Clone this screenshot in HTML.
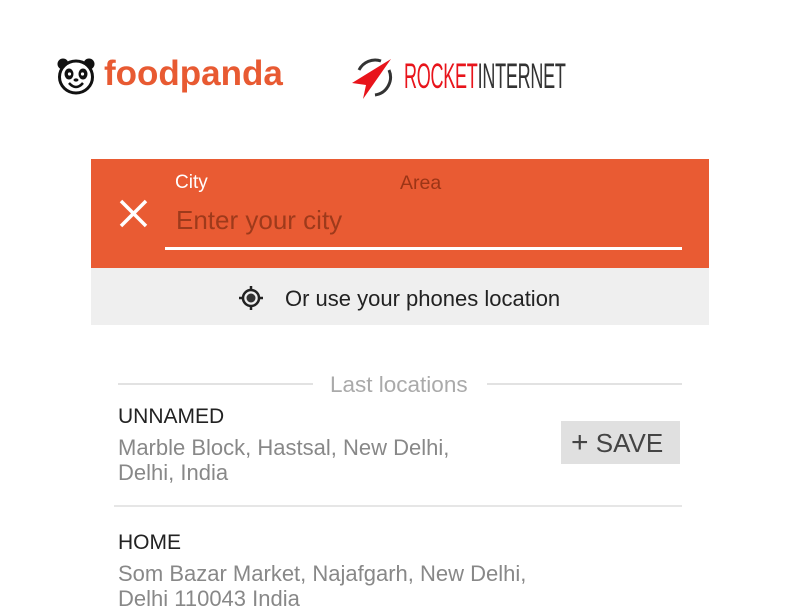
<!DOCTYPE html>
<html><head><meta charset="utf-8"><style>
*{margin:0;padding:0;box-sizing:border-box}
body{width:800px;height:600px;background:#fff;position:relative;overflow:hidden;font-family:"Liberation Sans",sans-serif}
.a{position:absolute;white-space:nowrap}
</style></head><body>
<svg class="a" style="left:56px;top:56px" width="40" height="40" viewBox="0 0 40 40">
<circle cx="7" cy="8" r="5.5" fill="#111"/><circle cx="33" cy="8" r="5.5" fill="#111"/>
<ellipse cx="20" cy="21" rx="16.5" ry="16" fill="#fff" stroke="#111" stroke-width="3"/>
<ellipse cx="13" cy="18" rx="4.5" ry="5.5" fill="#111"/><ellipse cx="27" cy="18" rx="4.5" ry="5.5" fill="#111"/>
<circle cx="13.5" cy="18" r="1.6" fill="#fff"/><circle cx="26.5" cy="18" r="1.6" fill="#fff"/>
<ellipse cx="20" cy="24" rx="2.5" ry="1.6" fill="#111"/>
<path d="M13 27 Q20 35 27 27" fill="none" stroke="#111" stroke-width="2.5"/>
</svg>
<div class="a" style="left:104px;top:54px;font-size:35px;font-weight:bold;color:#e85a32;transform-origin:0 0;transform:scaleX(1.0)">foodpanda</div>
<svg class="a" style="left:351px;top:56px" width="44" height="44" viewBox="0 0 44 44">
<path d="M8 14 A18 18 0 0 1 30 5" fill="none" stroke="#333" stroke-width="3"/>
<path d="M38 14 A18 18 0 0 1 24 39" fill="none" stroke="#333" stroke-width="3"/>
<path d="M40 3 L1 27 L15 29 L12 43 Z" fill="#e8141b"/>
</svg>
<div class="a" style="left:404px;top:57px;font-size:35px;transform-origin:0 0;transform:scaleX(.515);letter-spacing:-.5px"><span style="color:#e8141b">ROCKET</span><span style="color:#333">INTERNET</span></div>
<div class="a" style="left:91px;top:159px;width:618px;height:109px;background:#e95b33"></div>
<svg class="a" style="left:118px;top:198px" width="31" height="31" viewBox="0 0 31 31"><path d="M3 3L28 28M28 3L3 28" stroke="#fff" stroke-width="3.5"/></svg>
<div class="a" style="left:175px;top:172px;font-size:19px;color:#fff">City</div>
<div class="a" style="left:400px;top:172px;font-size:19.5px;color:#9c3516">Area</div>
<div class="a" style="left:176px;top:205px;font-size:26px;color:#9e3a1b">Enter your city</div>
<div class="a" style="left:165px;top:247px;width:517px;height:3px;background:#fff"></div>
<div class="a" style="left:91px;top:268px;width:618px;height:57px;background:#efefef"></div>
<svg class="a" style="left:237px;top:284px" width="28" height="28" viewBox="0 0 28 28">
<circle cx="14" cy="14" r="8" fill="none" stroke="#222" stroke-width="2.5"/><circle cx="14" cy="14" r="4.5" fill="#333"/>
<path d="M14 2V6M14 22V26M2 14H6M22 14H26" stroke="#222" stroke-width="2.5"/></svg>
<div class="a" style="left:285px;top:286px;font-size:22px;color:#222">Or use your phones location</div>
<div class="a" style="left:118px;top:383px;width:195px;height:2px;background:#e2e2e2"></div>
<div class="a" style="left:487px;top:383px;width:195px;height:2px;background:#e2e2e2"></div>
<div class="a" style="left:330px;top:372px;font-size:22.5px;color:#aaa">Last locations</div>
<div class="a" style="left:118px;top:405px;font-size:21px;color:#222">UNNAMED</div>
<div class="a" style="left:118px;top:435px;font-size:22px;color:#888;line-height:25px">Marble Block, Hastsal, New Delhi,<br>Delhi, India</div>
<div class="a" style="left:561px;top:421px;width:119px;height:43px;background:#e0e0e0"></div>
<div class="a" style="left:571px;top:428px;font-size:26px;color:#444"><span style="font-size:30px;line-height:26px">+</span> SAVE</div>
<div class="a" style="left:114px;top:505px;width:568px;height:2px;background:#e6e6e6"></div>
<div class="a" style="left:118px;top:531px;font-size:21px;color:#222">HOME</div>
<div class="a" style="left:118px;top:561px;font-size:22px;color:#888;line-height:25px">Som Bazar Market, Najafgarh, New Delhi,<br>Delhi 110043 India</div>
</body></html>
